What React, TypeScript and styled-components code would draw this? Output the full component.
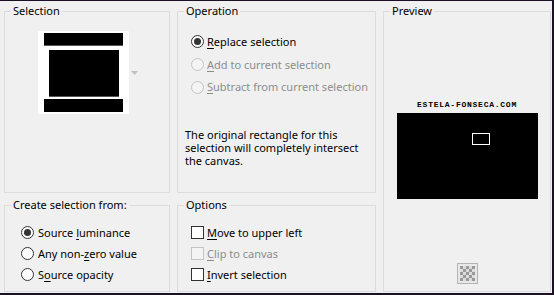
import React from "react";
import styled, { createGlobalStyle } from "styled-components";

const Global = createGlobalStyle`
  html, body { margin: 0; padding: 0; background: #f0f0f0; }
  body { font-family: "Noto Sans", "Segoe UI", sans-serif; font-size: 11px; color: #000; }
`;

const Window = styled.div`
  width: 554px;
  height: 295px;
  box-sizing: border-box;
  border-top: 1px solid #1c1024;
  border-right: 2px solid #1c1024;
  border-bottom: 2px solid #1c1024;
  background: #f0f0f0;
  display: grid;
  grid-template-columns: 166px 199px 168px;
  grid-template-rows: 189px 94px;
  column-gap: 7px;
  row-gap: 5px;
  padding: 3px 0 0 4px;
`;

const Group = styled.fieldset<{ $col: number; $row: string }>`
  margin: 0;
  padding: 0;
  min-width: 0;
  border: 1px solid #dcdcdc;
  display: flex;
  flex-direction: column;
  box-sizing: border-box;
  grid-column: ${(p) => p.$col};
  grid-row: ${(p) => p.$row};
`;

const Legend = styled.legend`
  margin-left: 6px;
  padding: 0 2px;
  font-size: 11px;
  line-height: 14px;
  color: #000;
`;

const Body = styled.div<{ $pt?: number; $pl?: number }>`
  display: flex;
  flex-direction: column;
  padding-top: ${(p) => p.$pt ?? 0}px;
  padding-left: ${(p) => p.$pl ?? 0}px;
  flex: 1;
`;

const ThumbRow = styled.div`
  display: flex;
  align-items: center;
  gap: 2px;
`;

const Row = styled.label<{ $h: number; $gap: number; $disabled?: boolean }>`
  display: flex;
  align-items: center;
  height: ${(p) => p.$h}px;
  gap: ${(p) => p.$gap}px;
  color: ${(p) => (p.$disabled ? "#8d8d8d" : "#000")};
  white-space: nowrap;
  line-height: 14px;
`;

const RadioDot = styled.span<{ $checked?: boolean; $disabled?: boolean }>`
  width: 13px;
  height: 13px;
  box-sizing: border-box;
  border-radius: 50%;
  border: 1px solid ${(p) => (p.$disabled ? "#c4c4c4" : "#333")};
  background: ${(p) => (p.$disabled ? "#f4f4f4" : "#fff")};
  display: flex;
  align-items: center;
  justify-content: center;
  flex: none;
  &::after {
    content: "";
    width: 7px;
    height: 7px;
    border-radius: 50%;
    background: #333;
    display: ${(p) => (p.$checked ? "block" : "none")};
  }
`;

const Box = styled.span<{ $disabled?: boolean }>`
  width: 13px;
  height: 13px;
  box-sizing: border-box;
  border: 1px solid ${(p) => (p.$disabled ? "#c4c4c4" : "#333")};
  background: ${(p) => (p.$disabled ? "#f4f4f4" : "#fff")};
  flex: none;
`;

const Note = styled.p`
  margin: 30px 0 0 -6px;
  line-height: 13px;
  width: 180px;
`;

const Mark = styled.span`
  font-family: "Liberation Mono", monospace;
  font-weight: bold;
  font-size: 8px;
  line-height: 10px;
  letter-spacing: 0.75px;
  color: #000;
  margin-top: 82px;
`;

const Canvas = styled.div`
  width: 141px;
  height: 86px;
  background: #000;
  margin-top: 3px;
  display: flex;
  padding: 20px 0 0 75px;
  box-sizing: border-box;
`;

const SelRect = styled.div`
  width: 18px;
  height: 12px;
  border: 1px solid #fff;
  box-sizing: border-box;
`;

const PreviewBody = styled.div`
  display: flex;
  flex-direction: column;
  align-items: center;
  flex: 1;
  padding-bottom: 7px;
`;

const Spacer = styled.div`
  flex: 1;
`;

const U = styled.span`
  text-decoration: underline;
  text-underline-offset: 2px;
`;

function Radio({ checked, disabled, children, h, gap }: { checked?: boolean; disabled?: boolean; children: React.ReactNode; h: number; gap: number }) {
  return (
    <Row $h={h} $gap={gap} $disabled={disabled}>
      <RadioDot $checked={checked} $disabled={disabled} />
      <span>{children}</span>
    </Row>
  );
}

function Check({ disabled, children }: { disabled?: boolean; children: React.ReactNode }) {
  return (
    <Row $h={21} $gap={3} $disabled={disabled}>
      <Box $disabled={disabled} />
      <span>{children}</span>
    </Row>
  );
}

function Thumb() {
  return (
    <svg width="91" height="83" viewBox="0 0 91 83">
      <rect x="0" y="0" width="91" height="83" rx="1" fill="#fff" />
      <rect x="6" y="2" width="79" height="12" fill="#000" />
      <rect x="6" y="14" width="79" height="1" fill="#555" />
      <rect x="11" y="19" width="70" height="46" fill="#000" />
      <rect x="11" y="65" width="70" height="1" fill="#555" />
      <rect x="6" y="68" width="79" height="13" fill="#000" />
    </svg>
  );
}

function Arrow() {
  return (
    <svg width="7" height="4" viewBox="0 0 7 4">
      <path d="M0 0 H7 L3.5 4 Z" fill="#c0c0c0" />
    </svg>
  );
}

function Checker() {
  const cells = [];
  for (let r = 0; r < 5; r++) {
    for (let c = 0; c < 5; c++) {
      if ((r + c) % 2 === 0) cells.push(<rect key={`${r}-${c}`} x={3 + c * 3} y={3 + r * 3} width="3" height="3" fill="#9a9a9a" />);
    }
  }
  return (
    <svg width="21" height="21" viewBox="0 0 21 21">
      <rect x="0.5" y="0.5" width="20" height="20" fill="#e8e8e8" stroke="#b4b4b4" />
      <rect x="3" y="3" width="15" height="15" fill="#dcdcdc" />
      {cells}
    </svg>
  );
}

export default function App() {
  return (
    <>
      <Global />
      <Window>
        <Group $col={1} $row="1">
          <Legend>Selection</Legend>
          <Body $pt={13} $pl={33}>
            <ThumbRow>
              <Thumb />
              <Arrow />
            </ThumbRow>
          </Body>
        </Group>
        <Group $col={2} $row="1">
          <Legend>Operation</Legend>
          <Body $pt={12} $pl={13}>
            <Radio h={23} gap={3} checked>
              <U>R</U>eplace selection
            </Radio>
            <Radio h={23} gap={3} disabled>
              <U>A</U>dd to current selection
            </Radio>
            <Radio h={22} gap={3} disabled>
              <U>S</U>ubtract from current selection
            </Radio>
            <Note>
              The original rectangle for this selection will completely intersect the canvas.
            </Note>
          </Body>
        </Group>
        <Group $col={3} $row="1 / span 2">
          <Legend>Preview</Legend>
          <PreviewBody>
            <Mark>ESTELA-FONSECA.COM</Mark>
            <Canvas>
              <SelRect />
            </Canvas>
            <Spacer />
            <Checker />
          </PreviewBody>
        </Group>
        <Group $col={1} $row="2">
          <Legend>Create selection from:</Legend>
          <Body $pt={10} $pl={16}>
            <Radio h={21} gap={4} checked>
              Source <U>l</U>uminance
            </Radio>
            <Radio h={21} gap={4}>
              Any non-<U>z</U>ero value
            </Radio>
            <Radio h={21} gap={4}>
              S<U>o</U>urce opacity
            </Radio>
          </Body>
        </Group>
        <Group $col={2} $row="2">
          <Legend>Options</Legend>
          <Body $pt={10} $pl={13}>
            <Check>
              <U>M</U>ove to upper left
            </Check>
            <Check disabled>
              <U>C</U>lip to canvas
            </Check>
            <Check>
              <U>I</U>nvert selection
            </Check>
          </Body>
        </Group>
      </Window>
    </>
  );
}
